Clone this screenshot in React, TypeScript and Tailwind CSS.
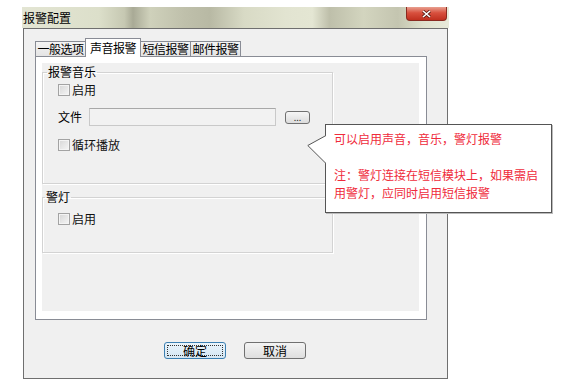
import React from 'react';

const font = "font-['Noto_Sans_CJK_SC','Noto_Sans',sans-serif]";

function Check({ label }: { label: string }) {
  return (
    <div className="flex items-center h-[14px]">
      <span className="w-[12px] h-[12px] border border-[#a3a3a3] bg-[linear-gradient(135deg,#d6d6d6,#f6f6f6)] shadow-[inset_0_0_0_1px_#f4f4f4]" />
      <span className="ml-[2px] text-[12px] leading-[14px] text-[#111]">{label}</span>
    </div>
  );
}

function Tab({ label, active }: { label: string; active?: boolean }) {
  return active ? (
    <div className="relative z-10 -ml-[1px] w-[56px] h-[19px] border border-b-0 border-[#898c95] bg-white flex items-center justify-center text-[12px] leading-[14px] tracking-[-0.5px] text-black">
      {label}
    </div>
  ) : (
    <div className="-ml-[1px] first:ml-0 w-[51px] h-[15px] mb-[1px] border border-b-0 border-[#898c95] bg-[linear-gradient(#f4f4f4,#e4e4e4)] flex items-center justify-center text-[12px] leading-[14px] tracking-[-0.5px] text-black">
      {label}
    </div>
  );
}

export default function App() {
  return (
    <div className={`relative w-[567px] h-[387px] bg-white overflow-hidden ${font}`}>
      <div className="ml-[22px] mt-[7px] w-[427px] flex flex-col">
        {/* title bar */}
        <div className="h-[21px] flex items-center justify-between bg-[linear-gradient(90deg,#e3e5d3_0%,#dcdfca_18%,#c6c8b2_24%,#a9aa96_26%,#cfd1bb_30%,#bfc0ab_38%,#b8b9a4_44%,#d8dac5_52%,#e2e4d1_62%,#e4e6d3_68%,#bebfaa_72%,#d3d5bf_80%,#c4c5b0_88%,#dfe1cd_94%,#e8eada_100%)]">
          <span className="pl-[1px] text-[12px] leading-[14px] text-black">报警配置</span>
          <div className="self-start w-[41px] h-[14px] mr-[2px] rounded-b-[4px] border border-t-0 border-[#8a2a20] bg-[linear-gradient(#e8a090,#d8503e_45%,#c0301f)] flex items-center justify-center">
            <svg width="9" height="8" viewBox="0 0 9 8">
              <path d="M1 1 L8 7 M8 1 L1 7" stroke="#5a1a12" strokeWidth="3" />
              <path d="M1 1 L8 7 M8 1 L1 7" stroke="#fff" strokeWidth="1.6" />
            </svg>
          </div>
        </div>

        {/* body */}
        <div className="mx-[1px] h-[351px] border border-[#6f6f6f] bg-[#f0f0f0] pt-[9px] pl-[11px] pr-[20px] flex flex-col">
          <div className="flex items-end h-[19px] -mb-[1px]">
            <Tab label="一般选项" />
            <Tab label="声音报警" active />
            <Tab label="短信报警" />
            <Tab label="邮件报警" />
          </div>
          <div className="h-[264px] border border-[#898c95] bg-white pt-[6px] pl-[6px] pr-[7px] pb-[8px] flex">
            <div className="flex-1 bg-[#f0f0f0] flex flex-col">
              <fieldset className="mt-[2px] w-[291px] h-[119px] border border-[#d3d3d3] shadow-[inset_1px_1px_0_#fff,1px_1px_0_#fff] pl-[4px]">
                <legend className="px-[1px] text-[12px] leading-[14px] text-black">报警音乐</legend>
                <div className="pl-[11px] flex flex-col">
                  <div className="mt-[4px]">
                    <Check label="启用" />
                  </div>
                  <div className="mt-[11px] flex items-center">
                    <span className="text-[12px] leading-[14px] text-black w-[31px]">文件</span>
                    <div className="w-[187px] h-[18px] border border-[#c9c9c9] border-t-[#a8a8a8] bg-[#f2f2f2]" />
                    <div className="ml-[9px] w-[25px] h-[13px] rounded-[3px] border border-[#707070] bg-[linear-gradient(#f6f6f6,#dcdcdc)] flex items-end justify-center text-[9px] leading-[9px] text-[#333] pb-[1px]">
                      ...
                    </div>
                  </div>
                  <div className="mt-[12px]">
                    <Check label="循环播放" />
                  </div>
                </div>
              </fieldset>
              <fieldset className="mt-[6px] w-[291px] h-[63px] border border-[#d3d3d3] shadow-[inset_1px_1px_0_#fff,1px_1px_0_#fff] pl-[2px]">
                <legend className="px-[1px] text-[12px] leading-[14px] text-black">警灯</legend>
                <div className="pl-[13px] mt-[8px]">
                  <Check label="启用" />
                </div>
              </fieldset>
            </div>
          </div>
          <div className="mt-[22px] pl-[8px] flex justify-center gap-[18px]">
            <div className="w-[62px] h-[17px] rounded-[3px] border border-[#3c7fb1] bg-[linear-gradient(#eaf4fb,#d4e6f3)] p-[2px]">
              <div className="w-full h-full border border-dotted border-[#333] flex items-center justify-center text-[12px] leading-[12px] text-black">
                确定
              </div>
            </div>
            <div className="w-[62px] h-[17px] rounded-[3px] border border-[#707070] bg-[linear-gradient(#f4f4f4,#dedede)] flex items-center justify-center text-[12px] leading-[12px] text-black">
              取消
            </div>
          </div>
        </div>
      </div>

      {/* callout */}
      <div className="absolute left-[325px] top-[124px] w-[227px] h-[89px] bg-white border border-[#555] shadow-[1px_1px_0_#bbb] pl-[8px] pt-[5px]">
        <svg className="absolute left-[-19px] top-[10px]" width="20" height="30" viewBox="0 0 20 30">
          <polygon points="19,0.5 0.8,10.5 19,28.5" fill="#fff" />
          <polyline points="19,0.5 0.8,10.5 19,28.5" fill="none" stroke="#555" strokeWidth="1" />
        </svg>
        <div className="text-[12px] leading-[18px] text-[#ef2b3b] whitespace-nowrap">
          可以启用声音，音乐，警灯报警
          <br />
          <br />
          注：警灯连接在短信模块上，如果需启
          <br />
          用警灯，应同时启用短信报警
        </div>
      </div>
    </div>
  );
}
